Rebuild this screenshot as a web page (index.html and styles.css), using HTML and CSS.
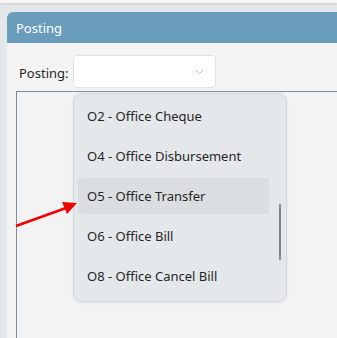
FILE: index.html
```html
<!DOCTYPE html>
<html>
<head>
  <title>Posting</title>
  <link rel="stylesheet" href="styles.css">
</head>
<body>
  <div class="topbar"></div>

  <div class="panel">
    <div class="panel-head">Posting</div>
    <div class="panel-body">
      <div class="field">
        <label>Posting:</label>
        <div class="select">
          <svg class="chev" width="9" height="6" viewBox="0 0 9 6"><path d="M1 1 L4.5 4.5 L8 1" fill="none" stroke="#b8b8b8" stroke-width="1"/></svg>
        </div>
      </div>
      <div class="grid-area"></div>
    </div>
  </div>

  <div class="dropdown">
    <div class="item">O2 - Office Cheque</div>
    <div class="item">O4 - Office Disbursement</div>
    <div class="item active">O5 - Office Transfer</div>
    <div class="item">O6 - Office Bill</div>
    <div class="item">O8 - Office Cancel Bill</div>
    <div class="scrollbar"></div>
  </div>

  <svg class="arrow" width="90" height="40" viewBox="0 0 90 40">
    <line x1="16" y1="36" x2="66" y2="18" stroke="#f00000" stroke-width="2.5"/>
    <polygon points="77,13 62,12 67,24" fill="#f00000"/>
  </svg>
</body>
</html>
```

FILE: styles.css
```css
body {
  margin: 0;
  font-family: 'Noto Sans', 'Open Sans', sans-serif;
  font-size: 13px;
  color: #262626;
  background: #e4e7ea;
  height: 338px;
  overflow: hidden;
  position: relative;
}

.topbar {
  height: 3px;
  background: #f7f7f7;
  box-shadow: 0 1px 3px rgba(0,0,0,0.12);
}

.panel {
  margin: 9px 0 0 7px;
  background: #f3f3f3;
  border-top-left-radius: 6px;
  overflow: hidden;
  height: 330px;
}

.panel-head {
  height: 31px;
  line-height: 33px;
  background: #6a9dbc;
  color: #fff;
  padding-left: 9px;
  font-size: 13px;
}

.panel-body {
  padding: 12px 0 0 9px;
}

.field {
  display: flex;
  align-items: center;
  padding-left: 3px;
}

.field label {
  width: 54px;
  padding-top: 3px;
}

.select {
  width: 143px;
  height: 33px;
  background: #fff;
  border: 1px solid #e2e2e2;
  border-radius: 4px;
  display: flex;
  align-items: center;
  justify-content: flex-end;
  padding-right: 11px;
  box-sizing: border-box;
}

.grid-area {
  margin-top: 3px;
  height: 260px;
  border-top: 1px solid #7a8ea0;
  border-left: 1px solid #7a8ea0;
}

.dropdown {
  position: absolute;
  left: 73px;
  top: 93px;
  width: 214px;
  height: 209px;
  background: #e4e8eb;
  border: 1px solid #d2d9de;
  border-radius: 8px;
  box-shadow: 0 1px 3px rgba(0,0,0,0.06);
  padding: 4px 0 0 4px;
  box-sizing: border-box;
}

.item {
  width: 191px;
  height: 36px;
  line-height: 36px;
  margin-bottom: 4px;
  padding-left: 9px;
  box-sizing: border-box;
  border-radius: 3px;
}

.item.active {
  background: #dadee1;
}

.scrollbar {
  position: absolute;
  left: 205px;
  top: 110px;
  width: 2px;
  height: 56px;
  background: #868686;
  border-radius: 1px;
}

.arrow {
  position: absolute;
  left: 0;
  top: 190px;
}
```
